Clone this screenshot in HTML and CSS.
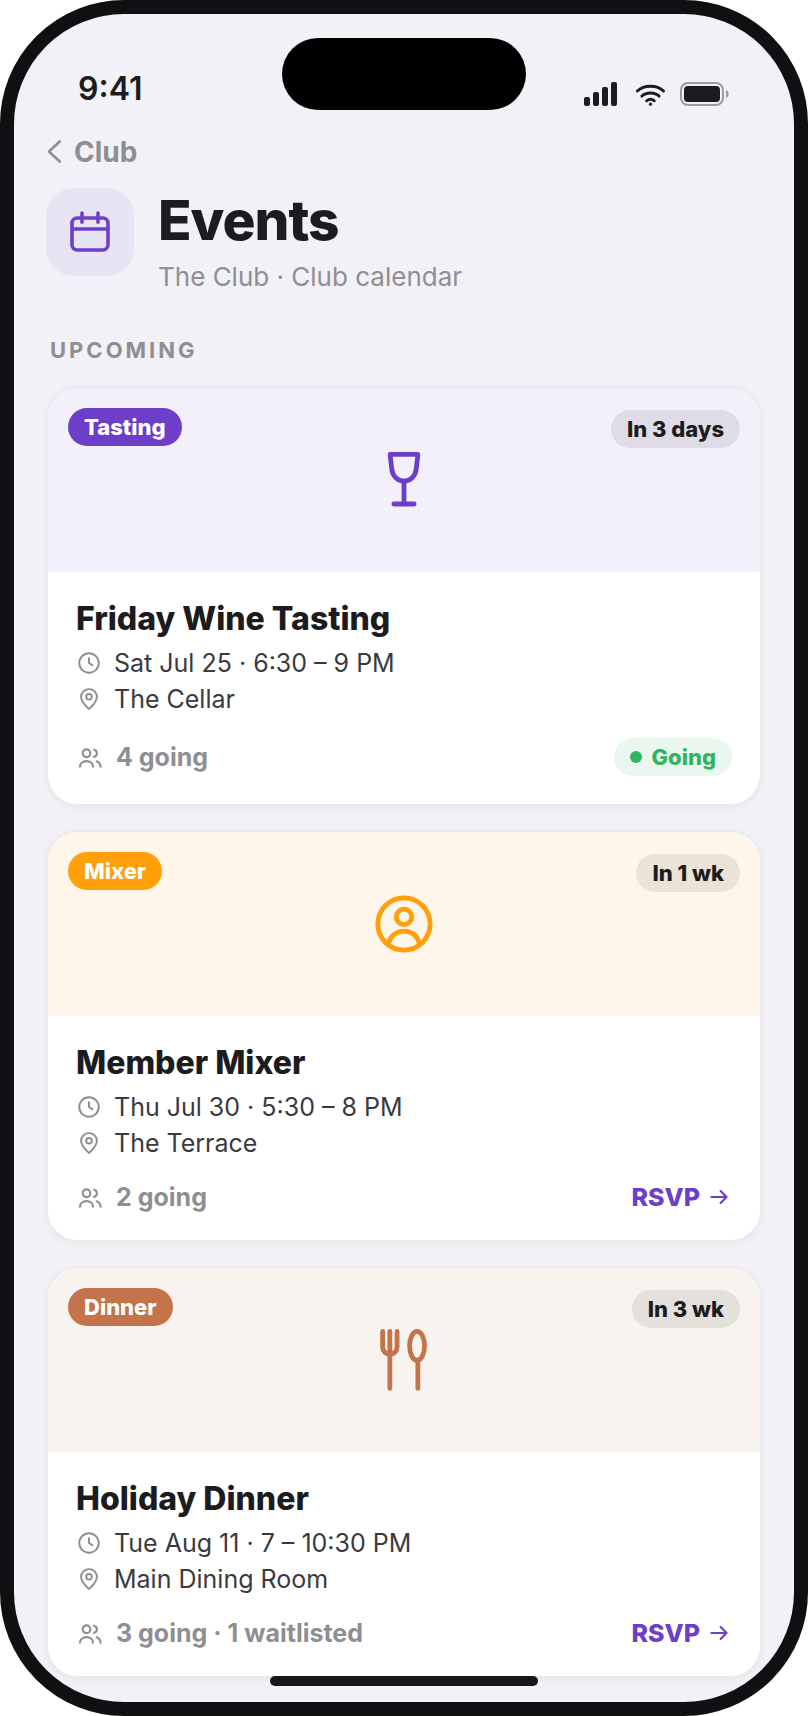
FILE: index.html
```
<!DOCTYPE html>
<html lang="en">
<head>
    <meta charset="UTF-8">
    <title>Events</title>
    <meta name="viewport" content="width=device-width, initial-scale=1.0">
    <link rel="stylesheet" href="styles.css">
</head>
<body>
<div class="phone">
    <div class="island"></div>
    <div class="status-bar">
        <span class="time">9:41</span>
        <div class="status-icons">
            <svg width="33" height="24" viewBox="0 0 33 24" fill="#1c1c1e">
                <rect x="0" y="15" width="6" height="9" rx="2"/>
                <rect x="9" y="10" width="6" height="14" rx="2"/>
                <rect x="18" y="5" width="6" height="19" rx="2"/>
                <rect x="27" y="0" width="6" height="24" rx="2"/>
            </svg>
            <svg width="33" height="24" viewBox="0 0 33 24" fill="none" stroke="#1c1c1e" stroke-width="2.9" stroke-linecap="round">
                <path d="M5.4 9C12 2.6 25 2.6 31.5 9"/>
                <path d="M9.9 14.1C14 9.9 23 9.9 27.1 14.1"/>
                <path d="M14.7 18.8c2.2-1.7 5.4-1.7 7.6 0"/>
                <circle cx="18.5" cy="22.2" r="1.6" fill="#1c1c1e" stroke="none"/>
            </svg>
            <svg width="50" height="24" viewBox="0 0 50 24">
                <rect x="1" y="1" width="42" height="22" rx="7" fill="none" stroke="#9b9ba0" stroke-width="2"/>
                <rect x="4" y="4" width="36" height="16" rx="4" fill="#1c1c1e"/>
                <path d="M46 8c3.4 1.2 3.4 6.8 0 8z" fill="#9b9ba0"/>
            </svg>
        </div>
    </div>

    <div class="content">
        <a class="back" href="#">
            <svg width="16" height="28" viewBox="0 0 16 28" fill="none" stroke="currentColor" stroke-width="2.6" stroke-linecap="round" stroke-linejoin="round">
                <path d="M13.7 3.5 3 13.5l10.7 10"/>
            </svg>
            Club
        </a>

        <header class="page-header">
            <div class="page-icon">
                <svg width="48" height="48" viewBox="0 0 24 24" fill="none" stroke="currentColor" stroke-width="1.8" stroke-linecap="round">
                    <rect x="3" y="5" width="18" height="16" rx="2.6"/>
                    <path d="M3 10.5h18M8 2.5v4.6M16 2.5v4.6"/>
                </svg>
            </div>
            <div>
                <h1>Events</h1>
                <p class="subtitle">The Club · Club calendar</p>
            </div>
        </header>

        <h2>Upcoming</h2>

        <div class="event-list">
            <article class="card tasting">
                <div class="banner">
                    <span class="pill tag">Tasting</span>
                    <span class="pill countdown">In 3 days</span>
                    <svg width="64" height="64" viewBox="0 0 24 24" fill="none" stroke="currentColor" stroke-width="1.8" stroke-linecap="round" stroke-linejoin="round">
                        <path d="M6.8 2.4h10.4l-.6 5.5c-.3 2.7-2.2 4.5-4.6 4.5s-4.3-1.8-4.6-4.5z"/>
                        <path d="M12 12.4V21M8.2 21h7.6"/>
                    </svg>
                </div>
                <div class="card-body">
                    <h3>Friday Wine Tasting</h3>
                    <p class="meta">
                        <svg width="26" height="26" viewBox="0 0 24 24"><use href="#clock"/></svg>
                        Sat Jul 25 · 6:30 – 9 PM
                    </p>
                    <p class="meta">
                        <svg width="26" height="26" viewBox="0 0 24 24"><use href="#pin"/></svg>
                        The Cellar
                    </p>
                    <div class="card-footer">
                        <span class="people">
                            <svg width="28" height="28" viewBox="0 0 24 24"><use href="#users"/></svg>
                            4 going
                        </span>
                        <span class="pill going">Going</span>
                    </div>
                </div>
            </article>

            <article class="card mixer">
                <div class="banner">
                    <span class="pill tag">Mixer</span>
                    <span class="pill countdown">In 1 wk</span>
                    <svg width="64" height="64" viewBox="0 0 24 24" fill="none" stroke="currentColor" stroke-width="1.8" stroke-linecap="round">
                        <circle cx="12" cy="12" r="9.8"/>
                        <circle cx="12" cy="9.3" r="2.9"/>
                        <path d="M6.2 19.4c.6-2.9 2.9-4.7 5.8-4.7s5.2 1.8 5.8 4.7"/>
                    </svg>
                </div>
                <div class="card-body">
                    <h3>Member Mixer</h3>
                    <p class="meta">
                        <svg width="26" height="26" viewBox="0 0 24 24"><use href="#clock"/></svg>
                        Thu Jul 30 · 5:30 – 8 PM
                    </p>
                    <p class="meta">
                        <svg width="26" height="26" viewBox="0 0 24 24"><use href="#pin"/></svg>
                        The Terrace
                    </p>
                    <div class="card-footer">
                        <span class="people">
                            <svg width="28" height="28" viewBox="0 0 24 24"><use href="#users"/></svg>
                            2 going
                        </span>
                        <button class="rsvp" type="button">
                            RSVP
                            <svg width="26" height="26" viewBox="0 0 24 24"><use href="#arrow"/></svg>
                        </button>
                    </div>
                </div>
            </article>

            <article class="card dinner">
                <div class="banner">
                    <span class="pill tag">Dinner</span>
                    <span class="pill countdown">In 3 wk</span>
                    <svg width="64" height="64" viewBox="0 0 24 24" fill="none" stroke="currentColor" stroke-width="1.8" stroke-linecap="round" stroke-linejoin="round">
                        <path d="M4 1.3v5.9a2.7 2.7 0 0 0 5.4 0V1.3M6.7 1.3v21.3"/>
                        <ellipse cx="16.9" cy="6.7" rx="2.8" ry="5.4"/>
                        <path d="M17.2 12.1v10.5"/>
                    </svg>
                </div>
                <div class="card-body">
                    <h3>Holiday Dinner</h3>
                    <p class="meta">
                        <svg width="26" height="26" viewBox="0 0 24 24"><use href="#clock"/></svg>
                        Tue Aug 11 · 7 – 10:30 PM
                    </p>
                    <p class="meta">
                        <svg width="26" height="26" viewBox="0 0 24 24"><use href="#pin"/></svg>
                        Main Dining Room
                    </p>
                    <div class="card-footer">
                        <span class="people">
                            <svg width="28" height="28" viewBox="0 0 24 24"><use href="#users"/></svg>
                            3 going · 1 waitlisted
                        </span>
                        <button class="rsvp" type="button">
                            RSVP
                            <svg width="26" height="26" viewBox="0 0 24 24"><use href="#arrow"/></svg>
                        </button>
                    </div>
                </div>
            </article>
        </div>
    </div>
    <div class="home-indicator"></div>
</div>

<!-- shared icons -->
<svg class="sprite" width="0" height="0">
    <symbol id="clock" viewBox="0 0 24 24">
        <circle cx="12" cy="12" r="9"/>
        <path d="M12 7.5V12l3 2"/>
    </symbol>
    <symbol id="pin" viewBox="0 0 24 24">
        <path d="M12 21.2c-2.7-2.6-7.3-6.4-7.3-11.3a7.3 7 0 0 1 14.6 0c0 4.9-4.6 8.7-7.3 11.3z"/>
        <circle cx="12" cy="9.9" r="2.6"/>
    </symbol>
    <symbol id="users" viewBox="0 0 24 24">
        <circle cx="9" cy="8.8" r="3.3"/>
        <path d="M3.4 20.4c0-2.9 2.3-4.9 5.6-4.9s5.6 2 5.6 4.9"/>
        <path d="M15.5 5.7a3.2 3.2 0 0 1 0 6.2M17.7 15.7c2 .7 3.2 2.3 3.4 4.7"/>
    </symbol>
    <symbol id="arrow" viewBox="0 0 24 24">
        <path d="M5 12h14M13.5 6.5 19 12l-5.5 5.5"/>
    </symbol>
</svg>
</body>
</html>
```
FILE: styles.css
```
*{
    margin: 0;
    padding: 0;
    box-sizing: border-box;
}
body{
    background: #fff;
    color: #1c1c1e;
    font-family: Inter, "Liberation Sans", sans-serif;
}
svg{
    display: block;
    flex: none;
}
.sprite{
    position: absolute;
}
.phone{
    position: relative;
    min-height: 100vh;
    background: #f2f1f7;
    border: 14px solid #101012;
    border-radius: 124px;
    overflow: hidden;
}
.island{
    position: absolute;
    top: 24px;
    left: 50%;
    width: 244px;
    height: 72px;
    margin-left: -122px;
    background: #000;
    border-radius: 36px;
}
.home-indicator{
    position: absolute;
    bottom: 16px;
    left: 50%;
    width: 268px;
    height: 10px;
    margin-left: -134px;
    background: #171718;
    border-radius: 5px;
}

/* status bar */
.status-bar{
    display: flex;
    justify-content: space-between;
    align-items: flex-end;
    padding: 58px 64px 28px;
}
.time{
    font-size: 32px;
    line-height: 34px;
    font-weight: 600;
}
.status-icons{
    display: flex;
    gap: 15px;
}

.content{
    padding: 0 32px 24px;
}
.back{
    display: inline-flex;
    align-items: center;
    gap: 12px;
    color: #8e8e93;
    font-size: 28px;
    line-height: 36px;
    font-weight: 700;
    text-decoration: none;
    vertical-align: top;
}
.page-header{
    display: flex;
    align-items: flex-start;
    gap: 24px;
    margin-top: 18px;
}
.page-icon{
    flex: none;
    padding: 20px;
    background: #e8e4f3;
    border-radius: 28px;
    color: #6d3fc8;
}
h1{
    font-size: 55px;
    line-height: 64px;
    font-weight: 800;
    letter-spacing: -1px;
}
.subtitle{
    margin-top: 8px;
    color: #8e8e93;
    font-size: 26px;
    line-height: 34px;
}
h2{
    margin: 42px 4px 22px;
    color: #8e8e93;
    font-size: 22px;
    line-height: 28px;
    font-weight: 700;
    letter-spacing: 3px;
    text-transform: uppercase;
}

/* event cards */
.event-list{
    display: flex;
    flex-direction: column;
    gap: 24px;
}
.card{
    background: #fff;
    border: 2px solid #ebebec;
    border-radius: 32px;
    box-shadow: 0 2px 6px rgba(0,0,0,.05);
    overflow: hidden;
}
.banner{
    position: relative;
    display: flex;
    justify-content: center;
    padding: 60px 0;
}
.tasting .banner{
    background: #f3effb;
    color: #6d3fc8;
}
.mixer .banner{
    background: #fff6eb;
    color: #ff9f0a;
}
.dinner .banner{
    background: #f8f3ef;
    color: #c4744a;
}
.pill{
    padding: 0 16px;
    border-radius: 19px;
    font-size: 22px;
    line-height: 38px;
    font-weight: 800;
}
.tag{
    position: absolute;
    top: 20px;
    left: 20px;
    color: #fff;
}
.tasting .tag{
    background: #6d3fc8;
}
.mixer .tag{
    background: #ff9f0a;
}
.dinner .tag{
    background: #c4744a;
}
.countdown{
    position: absolute;
    top: 22px;
    right: 20px;
    background: rgba(28,28,30,.09);
    color: #1c1c1e;
}
.card-body{
    padding: 28px;
}
h3{
    margin-bottom: 10px;
    font-size: 32px;
    line-height: 38px;
    font-weight: 800;
}
.meta{
    display: flex;
    align-items: center;
    gap: 12px;
    margin-bottom: 6px;
    color: #3a3a40;
    font-size: 25px;
    line-height: 30px;
}
.meta svg,
.people svg{
    fill: none;
    stroke: #8e8e93;
    stroke-width: 1.8;
    stroke-linecap: round;
    stroke-linejoin: round;
}
.card-footer{
    display: flex;
    justify-content: space-between;
    align-items: center;
    margin-top: 24px;
}
.people{
    display: flex;
    align-items: center;
    gap: 12px;
    color: #8e8e93;
    font-size: 25px;
    line-height: 30px;
    font-weight: 700;
}
.going{
    display: flex;
    align-items: center;
    gap: 10px;
    background: #eaf7ef;
    color: #30b460;
}
.going::before{
    content: "";
    width: 12px;
    height: 12px;
    background: #30b460;
    border-radius: 50%;
}
.rsvp{
    display: flex;
    align-items: center;
    gap: 6px;
    background: none;
    border: 0;
    color: #6d3fc8;
    font-family: inherit;
    font-size: 25px;
    line-height: 30px;
    font-weight: 800;
    cursor: pointer;
}
.rsvp svg{
    fill: none;
    stroke: currentColor;
    stroke-width: 2;
    stroke-linecap: round;
    stroke-linejoin: round;
}
```
